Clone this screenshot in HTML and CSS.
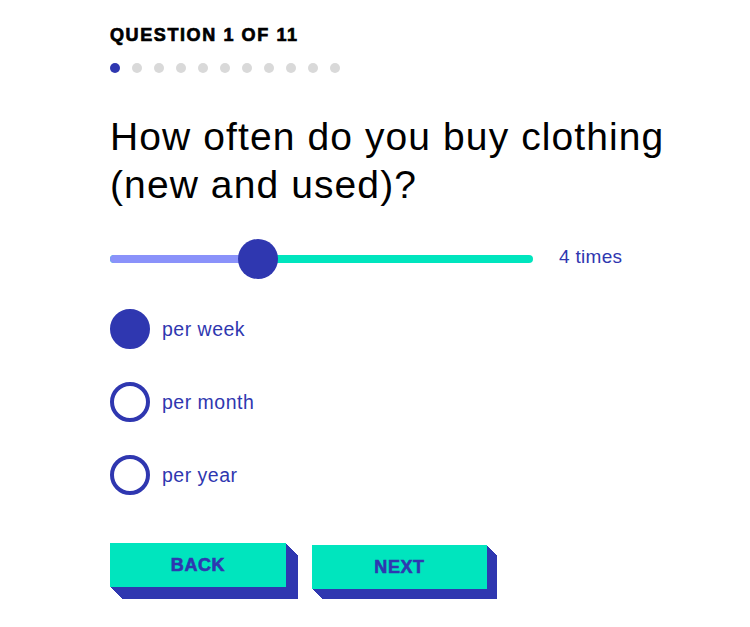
FILE: index.html
```html
<!DOCTYPE html>
<html lang="en">
<head>
  <meta charset="UTF-8" />
  <meta name="viewport" content="width=device-width, initial-scale=1.0"/>
  <title>Clothing quiz</title>
  <link rel="stylesheet" href="styles.css">
</head>
<body>

  <main class="quiz">
    <div class="paso">QUESTION 1 OF 11</div>
    <div class="puntos">
      <span class="activo"></span><span></span><span></span><span></span><span></span><span></span><span></span><span></span><span></span><span></span><span></span>
    </div>

    <h1>How often do you buy clothing (new and used)?</h1>

    <div class="slider">
      <div class="pista">
        <div class="lleno" style="width: 148px"></div>
        <div class="perilla" style="left: 148px"></div>
      </div>
      <span class="valor">4 times</span>
    </div>

    <div class="opciones">
      <label class="opcion marcada"><span class="radio"></span>per week</label>
      <label class="opcion"><span class="radio"></span>per month</label>
      <label class="opcion"><span class="radio"></span>per year</label>
    </div>

    <div class="botones">
      <button class="btn">BACK</button>
      <button class="btn btn-next">NEXT</button>
    </div>
  </main>

</body>
</html>
```

FILE: styles.css
```css
body {
  margin: 0; padding: 0;
  font-family: 'Liberation Sans', Arial, sans-serif;
  background: #fff; color: #000;
}

.quiz {
  padding: 25px 0 30px 110px;
  width: 600px;
}

.paso {
  font-weight: bold;
  font-size: 18px;
  line-height: 21px;
  letter-spacing: 1.6px;
  -webkit-text-stroke: 0.7px #000;
}

.puntos {
  display: flex;
  gap: 12px;
  margin-top: 17px;
}

.puntos span {
  width: 10px; height: 10px;
  border-radius: 50%;
  background: #d9d9d9;
}

.puntos span.activo { background: #2f37b0; }

h1 {
  font-weight: normal;
  font-size: 39px;
  line-height: 48px;
  margin: 40px 0 0;
  letter-spacing: 1.1px;
}

.slider {
  display: flex;
  align-items: center;
  margin-top: 30px;
  height: 40px;
}

.pista {
  position: relative;
  width: 423px; height: 8px;
  border-radius: 4px;
  background: #00e5be;
}

.lleno {
  height: 100%;
  border-radius: 4px 0 0 4px;
  background: #8a92fa;
}

.perilla {
  position: absolute;
  top: -16px;
  width: 40px; height: 40px;
  margin-left: -20px;
  border-radius: 50%;
  background: #2f37b0;
}

.valor {
  margin-left: 26px;
  margin-top: -4px;
  font-size: 19px;
  letter-spacing: 0.3px;
  color: #2f37b0;
}

.opciones {
  display: flex;
  flex-direction: column;
  gap: 33px;
  margin-top: 30px;
}

.opcion {
  display: flex;
  align-items: center;
  gap: 12px;
  font-size: 19.5px;
  letter-spacing: 0.5px;
  color: #2f37b0;
  line-height: 40px;
}

.radio {
  box-sizing: border-box;
  width: 40px; height: 40px;
  border: 4px solid #2f37b0;
  border-radius: 50%;
}

.opcion.marcada .radio { background: #2f37b0; }

.botones {
  display: flex;
  align-items: flex-start;
  gap: 26px;
  margin-top: 48px;
}

.btn {
  width: 176px; height: 44px;
  border: none;
  background: #00e5be;
  color: #2f37b0;
  font-family: inherit;
  font-weight: bold;
  font-size: 18px;
  letter-spacing: 0.6px;
  -webkit-text-stroke: 0.6px #2f37b0;
  padding: 0;
  box-shadow: 1px 1px #2f37b0, 2px 2px #2f37b0, 3px 3px #2f37b0, 4px 4px #2f37b0,
    5px 5px #2f37b0, 6px 6px #2f37b0, 7px 7px #2f37b0, 8px 8px #2f37b0,
    9px 9px #2f37b0, 10px 10px #2f37b0, 11px 11px #2f37b0, 12px 12px #2f37b0;
}

.btn-next {
  width: 175px;
  margin-top: 2px;
  box-shadow: 1px 1px #2f37b0, 2px 2px #2f37b0, 3px 3px #2f37b0, 4px 4px #2f37b0,
    5px 5px #2f37b0, 6px 6px #2f37b0, 7px 7px #2f37b0, 8px 8px #2f37b0,
    9px 9px #2f37b0, 10px 10px #2f37b0;
}
```
